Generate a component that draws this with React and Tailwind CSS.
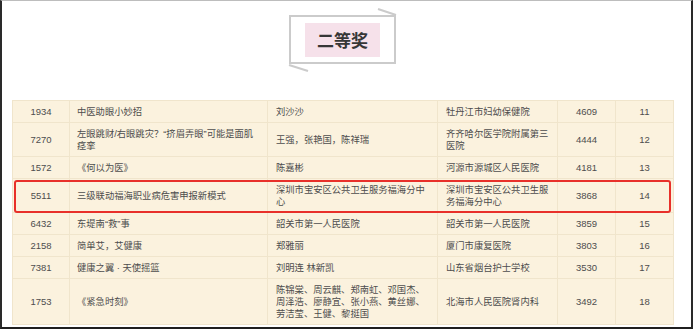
const rows = [
  { id: "1934", title: "中医助眼小妙招", author: "刘沙沙", org: "牡丹江市妇幼保健院", score: "4609", rank: "11" },
  { id: "7270", title: "左眼跳财/右眼跳灾？“挤眉弄眼”可能是面肌痉挛", author: "王强，张艳国，陈祥瑞", org: "齐齐哈尔医学院附属第三医院", score: "4444", rank: "12" },
  { id: "1572", title: "《何以为医》", author: "陈嘉彬", org: "河源市源城区人民医院", score: "4181", rank: "13" },
  { id: "5511", title: "三级联动福海职业病危害申报新模式", author: "深圳市宝安区公共卫生服务福海分中心", org: "深圳市宝安区公共卫生服务福海分中心", score: "3868", rank: "14" },
  { id: "6432", title: "东堤南“救”事", author: "韶关市第一人民医院", org: "韶关市第一人民医院", score: "3859", rank: "15" },
  { id: "2158", title: "简单艾，艾健康", author: "郑雅丽", org: "厦门市康复医院", score: "3803", rank: "16" },
  { id: "7381", title: "健康之翼 · 天使摇篮", author: "刘明连 林新凯", org: "山东省烟台护士学校", score: "3530", rank: "17" },
  { id: "1753", title: "《紧急时刻》", author: "陈锦棠、周云麒、郑南虹、邓国杰、周泽浩、廖静宜、张小燕、黄丝娜、劳洁莹、王健、黎挺国", org: "北海市人民医院肾内科", score: "3492", rank: "18" },
];

const cell = "border border-[#f0e5cc] pt-[5px] pb-[4px] leading-[12px] align-middle";

const App = () => {
  return (
    <div
      className="w-[693px] h-[329px] overflow-hidden bg-white border-t border-t-[#bdbdbd] border-l-2 border-l-[#2a2a2a] border-r-2 border-r-[#2a2a2a] border-b-2 border-b-[#1f1f1f]"
      style={{ fontFamily: '"Liberation Sans", "Noto Sans CJK SC", sans-serif' }}
    >
      <div className="ml-[10px] w-[661px]">
        {/* title badge */}
        <div className="flex justify-center pt-[14px]">
          <div className="relative border-2 border-[#cbcbcb] px-[14px] pt-[6px] pb-[5px]">
            <div className="bg-[#f6e1ea] w-[75px] h-[34px] flex items-center justify-center">
              <span className="text-[17px] font-bold text-[#363636]" style={{ fontFamily: '"Noto Sans CJK SC", sans-serif' }}>二等奖</span>
            </div>
            <svg className="absolute -left-[2px] -top-[2px] overflow-visible" width="107" height="49">
              <line x1="89" y1="-6" x2="107" y2="0" stroke="#cbcbcb" strokeWidth="2" />
              <line x1="0" y1="50" x2="19" y2="56" stroke="#cbcbcb" strokeWidth="2" />
            </svg>
          </div>
        </div>

        {/* result table */}
        <div className="relative mt-[36px]">
          <table className="w-[661px] table-fixed border-collapse bg-[#fbf2de] text-[9.3px] text-[#4d4d4d]">
            <colgroup>
              <col className="w-[57px]" />
              <col className="w-[198px]" />
              <col className="w-[170px]" />
              <col className="w-[120px]" />
              <col className="w-[58px]" />
              <col className="w-[58px]" />
            </colgroup>
            <tbody>
              {rows.map((r) => (
                <tr key={r.id}>
                  <td className={`${cell} text-center text-[9.5px]`}>{r.id}</td>
                  <td className={`${cell} px-[7px]`}>{r.title}</td>
                  <td className={`${cell} px-[8px]`}>{r.author}</td>
                  <td className={`${cell} px-[8px]`}>{r.org}</td>
                  <td className={`${cell} text-center text-[9.5px]`}>{r.score}</td>
                  <td className={`${cell} text-center text-[9.5px]`}>{r.rank}</td>
                </tr>
              ))}
            </tbody>
          </table>
          {/* highlight */}
          <div className="absolute left-[2px] top-[80px] w-[657px] h-[33px] border-2 border-[#e8302a] rounded-[3px] pointer-events-none" />
        </div>
      </div>
    </div>
  );
};

export default App;
